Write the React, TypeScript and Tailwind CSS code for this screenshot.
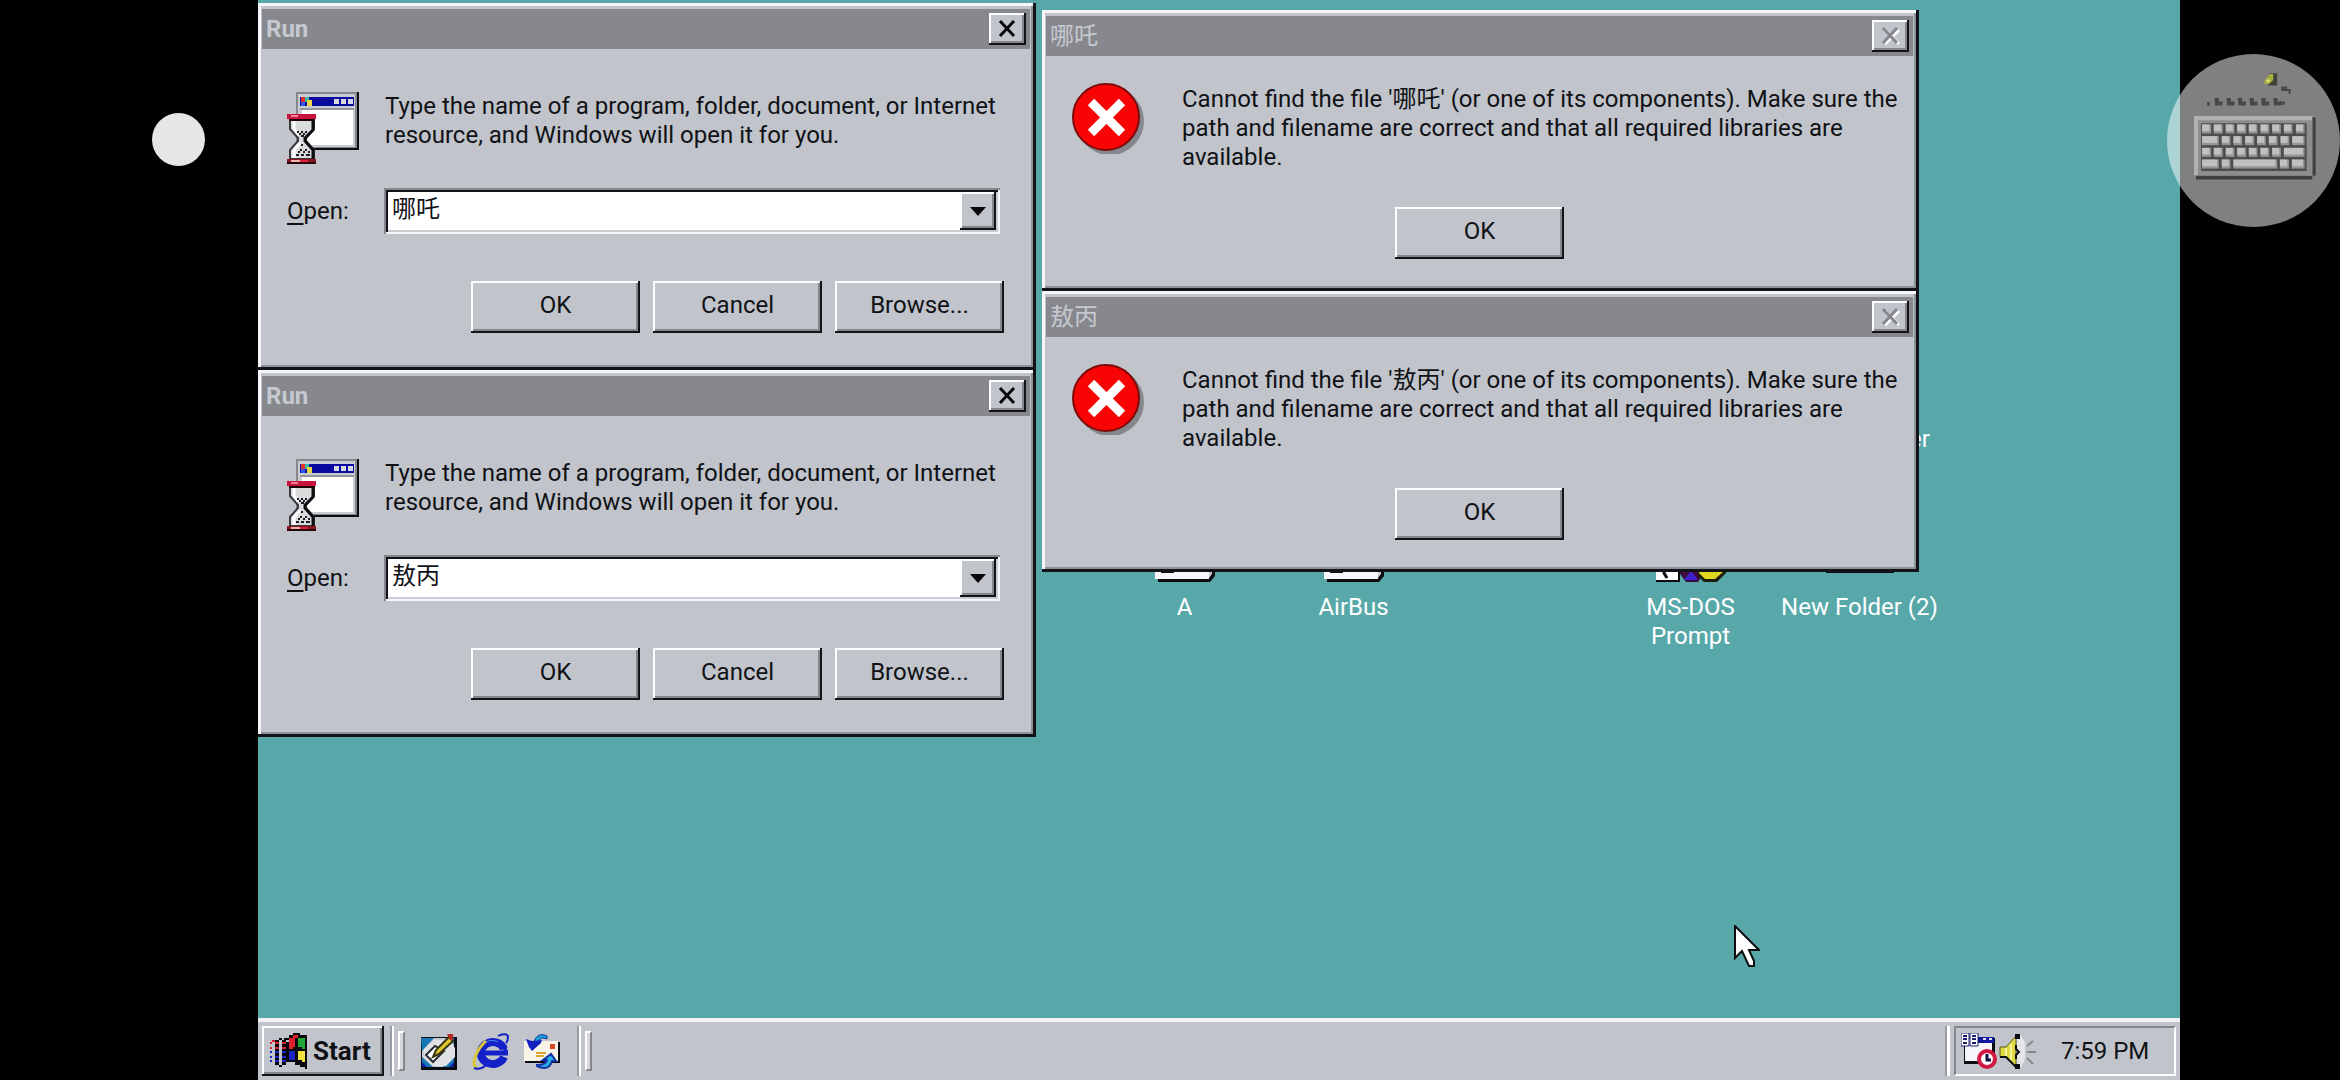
import { useState } from "react";

const raised =
  "bg-[#c1c4cb] shadow-[inset_-2px_-2px_0_#111318,inset_2px_2px_0_#fcfdff,inset_-4px_-4px_0_#85878d]";
const windowFrame =
  "absolute bg-[#c1c4cb] p-[6px] pl-[4px] shadow-[inset_-3px_-3px_0_#111318,inset_3px_3px_0_#f4f6fa,inset_-5px_-5px_0_#8f9198]";

const palette: Record<string, string> = {
  k: "#08080c",
  r: "#e0202c",
  g: "#20a838",
  b: "#1c24c8",
  y: "#f0e040",
};

const flag = [
  "..........kkk...",
  "........kkrrkkkk",
  "....k.kkrrrkgggk",
  ".rkk.kk.rrrkgggk",
  "r.rr.rrkrrrkgggk",
  "..kk.kkkrrrkgggk",
  "r.rr.rrkrrkkkkgk",
  "..kk.kkkkkkkkkkk",
  "b.bb.bbkbbbkyyyk",
  "..kk.kkkbbbkyyyk",
  "b.bb.bbkbbbkyyyk",
  "..kk.kkkbbbkyyyk",
  "b.bb.bbkkkkkkkyk",
  "..kk.kk....kkkkk",
  "....k........kkk",
  "...............k",
];

// x, width of every key, one list per row
const keyRows = [
  [[157, 27], [192, 27], [228, 26], [262, 27], [297, 26], [332, 26], [367, 26], [402, 26], [438, 26]],
  [[157, 50], [216, 26], [251, 26], [286, 27], [322, 26], [357, 26], [392, 26], [427, 37]],
  [[157, 27], [192, 27], [228, 26], [262, 27], [297, 26], [332, 26], [367, 26], [402, 62]],
  [[157, 50], [216, 26], [251, 131], [390, 27], [426, 38]],
];

function FlagIcon() {
  return (
    <svg viewBox="0 0 16 16" preserveAspectRatio="none" shapeRendering="crispEdges" className="h-9 w-[37px]">
      {flag.map((row, y) =>
        row.split("").map((c, x) =>
          c === "." ? null : <rect key={`${x}-${y}`} x={x} y={y} width="1" height="1" fill={palette[c]} />
        )
      )}
    </svg>
  );
}

function RunIcon() {
  return (
    <svg viewBox="0 0 72 72" className="h-[72px] w-[72px] shrink-0">
      <g shapeRendering="crispEdges">
        <rect x="9" y="0" width="63" height="58" fill="#0c0d10" />
        <rect x="9" y="0" width="61" height="56" fill="#85878d" />
        <rect x="11" y="2" width="57" height="53" fill="#c9ccd2" />
        <rect x="13" y="5" width="54" height="9" fill="#0a0aa0" />
        <rect x="14" y="5" width="4" height="5" fill="#e03030" />
        <rect x="18" y="5" width="4" height="5" fill="#38b8a0" />
        <rect x="14" y="10" width="4" height="4" fill="#3058f0" />
        <rect x="20" y="8" width="5" height="6" fill="#e8d848" />
        <rect x="47" y="7" width="5" height="5" fill="#d8dae0" />
        <rect x="54" y="7" width="5" height="5" fill="#d8dae0" />
        <rect x="61" y="7" width="5" height="5" fill="#d8dae0" />
        <rect x="13" y="16" width="54" height="2" fill="#94969c" />
        <rect x="15" y="18" width="51" height="35" fill="#fff" />
      </g>
      <path d="M3 28h24v9l-8 9v3l8 9v9H3v-9l8-9v-3l-8-9z" fill="#d9dbdd" stroke="#3a3b40" strokeWidth="2" />
      <path d="M7 29v8l5 6M7 66v-8l6-7" stroke="#fff" strokeWidth="3" fill="none" />
      <path d="M26 29v9l-8 8v3l8 9v9" stroke="#0c0d10" strokeWidth="3" fill="none" />
      <path
        d="M10 40h2m2 0h2m2 0h2M12 42h2m2 0h2M14 44h3M14 53h2M13 58h2m3 0h2M11 60h2m3 0h2m3 0h2M9 63h3m2 0h3m2 0h4"
        stroke="#1c1d20"
        strokeWidth="2"
      />
      <g shapeRendering="crispEdges">
        <rect x="0" y="22" width="29" height="5" fill="#c8143c" />
        <rect x="4" y="23" width="7" height="2" fill="#f08098" />
        <rect x="2" y="27" width="26" height="2" fill="#200408" />
        <rect x="0" y="67" width="29" height="5" fill="#8c1420" />
        <rect x="4" y="68" width="9" height="2" fill="#f0b0b0" />
        <rect x="13" y="68" width="8" height="2" fill="#e02038" />
        <rect x="0" y="70" width="29" height="2" fill="#280408" />
      </g>
    </svg>
  );
}

function ErrorIcon() {
  return (
    <svg viewBox="0 0 72 72" className="h-[72px] w-[72px] shrink-0">
      <circle cx="38" cy="39" r="34" fill="#85878d" />
      <circle cx="34" cy="35" r="33" fill="#f80404" stroke="#7c0808" strokeWidth="2" />
      <path d="M19 20l31 31M50 20L19 51" stroke="#fff" strokeWidth="9" />
    </svg>
  );
}

function NotepadIcon() {
  return (
    <svg viewBox="0 0 37 37" className="h-[37px] w-[37px]">
      <path d="M0 4h36v33H0z" fill="#0a0c14" />
      <path d="M1 5h32v29H1z" fill="#c9ccd2" />
      <path d="M0 5h13L1 18zM24 5h9v6zM1 24l11 10H1zM33 24v10H22z" fill="#1478b8" />
      <path d="M1 29l5 5H1zM33 29v5h-5z" fill="#1420a8" />
      <path d="M13 7h14l7 8v9l-9 9H12L3 24v-8z" fill="#dfe1e6" />
      <path d="M5 22l9-9 9 5-11 11z" fill="#fff" stroke="#2a2c34" strokeWidth="2" />
      <path d="M12 24l3-7L28 4l4 4-14 13z" fill="#e0c830" stroke="#3c3410" strokeWidth="2" />
      <path d="M26 1h6v6h-3z" fill="#b02820" />
    </svg>
  );
}

function ExplorerIcon() {
  return (
    <svg viewBox="0 0 38 37" className="h-[37px] w-[38px]">
      <path d="M32 24a12 11 0 1 1 0-8" fill="none" stroke="#1420c8" strokeWidth="8" />
      <path d="M10 20h26" stroke="#1420c8" strokeWidth="5" />
      <path d="M33 12c2 3 3 6 3 10h-7z" fill="#1420c8" />
      <path d="M14 9c3-2 8-2 12 0" fill="none" stroke="#4c90f0" strokeWidth="1" />
      <path d="M5 35C-2 33 4 17 14 8" fill="none" stroke="#d8c838" strokeWidth="3" />
      <path d="M2 35c5 2 9 0 12-3" fill="none" stroke="#1420c8" strokeWidth="2" />
      <path d="M26 3c5-3 10-2 10 1 0 2 0 4-2 6" fill="none" stroke="#1420c8" strokeWidth="2" />
    </svg>
  );
}

function MailIcon() {
  return (
    <svg viewBox="0 0 37 37" className="h-[37px] w-[37px]">
      <path d="M1 9h35v21H1z" fill="#0a0c14" />
      <path d="M0 8h34v20H0z" fill="#f8f4e8" />
      <path d="M12 20h10M12 23h8" stroke="#d8a830" strokeWidth="2" />
      <rect x="26" y="11" width="5" height="5" fill="#d84820" />
      <path d="M23 3C17 0 12 2 10 9l4 1c2-5 4-6 9-4z" fill="#18a0d8" stroke="#1430a8" strokeWidth="1" />
      <path d="M2 6l6 2 10-1-1 3-9 8-3-4z" fill="#1420c0" />
      <path d="M13 33c8 4 13 2 15-5h4l-5-7-8 6h4c-1 4-4 5-10 5z" fill="#28b0e0" stroke="#1430a8" strokeWidth="2" />
    </svg>
  );
}

function SchedulerIcon() {
  return (
    <svg viewBox="0 0 38 37" className="h-[37px] w-[38px]">
      <path d="M3 5h31v26H3z" fill="#0a0c14" />
      <path d="M4 6h27v22H4z" fill="#f6f6fa" />
      <path d="M17 4h16v6H17z" fill="#1018a0" />
      <path d="M22 6h3m3 0h3" stroke="#dfe1f0" strokeWidth="2" />
      <path d="M0 0h8v13H0zM9 0h8v13H9z" fill="#fff" stroke="#1c2070" strokeWidth="1" />
      <path d="M2 3h4M2 6h4M2 10h4M11 3h4M11 6h4M11 10h4" stroke="#1c2070" strokeWidth="2" />
      <circle cx="26" cy="26" r="8" fill="#fff" stroke="#d01840" strokeWidth="4" />
      <path d="M26 21v6h4" fill="none" stroke="#101040" strokeWidth="3" />
    </svg>
  );
}

function SpeakerIcon() {
  return (
    <svg viewBox="0 0 38 37" className="h-[37px] w-[38px]">
      <path d="M18 2h4l4 8v16l-4 9h-4z" fill="#e4e6ea" />
      <path d="M1 14h6L17 3v31L7 24H1z" fill="#e0d840" stroke="#5c5818" strokeWidth="1" />
      <path d="M7 15v9M12 11v16" stroke="#f6f4a0" strokeWidth="2" />
      <path d="M1 24h6l10 10" stroke="#0a0c10" strokeWidth="2" fill="none" />
      <path d="M16 1h5v5h-5zM16 31h5v5h-5z" fill="#0a0c10" />
      <path d="M17 12v4l3 3-3 3v4" stroke="#0a0c10" strokeWidth="2" fill="none" />
      <path d="M28 13l6-5M28 19h9M28 25l6 6" stroke="#85878d" strokeWidth="2" />
    </svg>
  );
}

function KeyboardIcon() {
  return (
    <svg viewBox="52 42 518 518" className="h-full w-full">
      <path d="M360 100h22v36h-28z" fill="#40423c" />
      <path d="M344 122l16-20h10v18l-12 12h-14z" fill="#a4b040" />
      <path d="M350 118h10v8h-10z" fill="#dce078" />
      <path d="M394 139h18v8h10v14h-6v-8h-22zM172 186h8v10h-8z" fill="#46484a" />
      {[194, 230, 264, 299, 334, 370].map((x) => (
        <path key={x} d={`M${x} 174h13v10h11v12h-22z`} fill="#46484a" />
      ))}
      <path d="M390 184h15v10h-15z" fill="#46484a" />
      <path d="M139 232h358v174H487v12H139z" fill="#3c3e40" />
      <path d="M133 228h354v178H133z" fill="#b0b2b2" />
      <path d="M145 240h342v166H145z" fill="#8c8e8e" />
      <path d="M154 249h316v143H154z" fill="#4c4e4e" />
      {keyRows.map((row, r) =>
        row.map(([x, w]) => (
          <g key={`${r}-${x}`}>
            <rect x={x} y={253 + r * 35} width={w} height="27" fill="#949696" />
            <rect x={x} y={253 + r * 35} width={w - 5} height="20" fill="#bfc1c1" />
          </g>
        ))
      )}
    </svg>
  );
}

function CloseButton({ disabled = false }: { disabled?: boolean }) {
  return (
    <button type="button" aria-label="Close" disabled={disabled} className={`flex h-8 w-[37px] items-center justify-center ${raised}`}>
      <svg viewBox="0 0 20 18" className="h-[18px] w-5">
        {disabled && <path d="M4 3l14 14M18 3L4 17" stroke="#fff" strokeWidth="3" />}
        <path d="M2 1l14 15M16 1L2 16" stroke={disabled ? "#85878d" : "#08080c"} strokeWidth="3" />
      </svg>
    </button>
  );
}

function PushButton({ children }: { children: string }) {
  return (
    <button type="button" className={`h-[52px] w-[169px] pb-1 ${raised}`}>
      {children}
    </button>
  );
}

function TitleBar({ title, disabled = false }: { title: string; disabled?: boolean }) {
  return (
    <div className="flex h-10 items-center justify-between bg-[#86888e] px-1 text-[#c6c9d0]">
      <h2 className={disabled ? "" : "font-bold"}>{title}</h2>
      <CloseButton disabled={disabled} />
    </div>
  );
}

function RunDialog({ id, name, className }: { id: string; name: string; className: string }) {
  const [value, setValue] = useState(name);
  return (
    <section className={`${windowFrame} w-[778px] ${className}`}>
      <TitleBar title="Run" />
      <div className="pt-[43px] pr-[26px] pb-[31px] pl-[25px]">
        <div className="flex gap-[26px]">
          <RunIcon />
          <p className="flex-1">
            Type the name of a program, folder, document, or Internet resource, and Windows will open it for you.
          </p>
        </div>
        <div className="mt-6 flex items-center pr-1">
          <label htmlFor={id} className="w-[97px]">
            <span className="underline underline-offset-4">O</span>pen:
          </label>
          <div className="flex h-[46px] flex-1 bg-white p-1 shadow-[inset_2px_2px_0_#85878d,inset_-2px_-2px_0_#f4f6fa,inset_4px_4px_0_#111318,inset_-4px_-4px_0_#c9ccd2]">
            <input
              id={id}
              value={value}
              onChange={(e) => setValue(e.target.value)}
              className="min-w-0 flex-1 bg-transparent pb-1 pl-1 outline-none"
            />
            <button type="button" aria-label="Show list" className={`flex w-9 items-center justify-center ${raised}`}>
              <svg viewBox="0 0 16 9" className="h-[9px] w-4">
                <path d="M0 0h16L8 9z" fill="#08080c" />
              </svg>
            </button>
          </div>
        </div>
        <div className="mt-[47px] flex justify-end gap-[13px]">
          <PushButton>OK</PushButton>
          <PushButton>Cancel</PushButton>
          <PushButton>Browse...</PushButton>
        </div>
      </div>
    </section>
  );
}

function ErrorDialog({ name, className }: { name: string; className: string }) {
  return (
    <section className={`${windowFrame} w-[877px] ${className}`}>
      <TitleBar title={name} disabled />
      <div className="flex flex-col items-center pt-[26px] pb-[26px] pl-[26px]">
        <div className="flex w-full gap-[38px]">
          <ErrorIcon />
          <p className="flex-1 pt-[3px]">
            {`Cannot find the file '${name}' (or one of its components). Make sure the path and filename are correct and that all required libraries are available.`}
          </p>
        </div>
        <div className="mt-[35px] mr-[26px]">
          <PushButton>OK</PushButton>
        </div>
      </div>
    </section>
  );
}

function FolderIcon() {
  return (
    <svg viewBox="0 0 60 30" className="h-[30px] w-[60px]">
      <path d="M3 0h57v24l-5 6H3z" fill="#0c0d10" />
      <path d="M54 0h3v22l-3 4z" fill="#c9ccd2" />
      <path d="M0 0h54v27H0z" fill="#f8f8fc" />
      <path d="M6 16h13v5H6z" fill="#0c0d10" />
    </svg>
  );
}

function DosIcon() {
  return (
    <svg viewBox="0 0 70 30" className="h-[30px] w-[70px]">
      <path d="M0 0h24v30H0z" fill="#0c0d10" />
      <path d="M0 0h22v28H0z" fill="#fff" />
      <path d="M12 17H8v4l3 5" fill="none" stroke="#0c0d10" strokeWidth="3" />
      <path d="M24 0h22v24l-4 6H30l-6-8z" fill="#3c0c40" />
      <path d="M28 28l7-9 7 9z" fill="#4020d0" />
      <path d="M42 14h28v7l-9 9H48l-6-6z" fill="#1c1c08" />
      <path d="M43 12h24v8l-8 7H49l-6-6z" fill="#e0d820" />
    </svg>
  );
}

function DarkIcon() {
  return (
    <svg viewBox="0 0 68 30" className="h-[30px] w-[68px]">
      <path d="M0 0h68v21H0z" fill="#0c0d18" />
    </svg>
  );
}

const shortcuts = [
  { label: "A", icon: FolderIcon, className: "left-[842px]" },
  { label: "AirBus", icon: FolderIcon, className: "left-[1011px]" },
  { label: "MS-DOS Prompt", icon: DosIcon, className: "left-[1348px]" },
  { label: "New Folder (2)", icon: DarkIcon, className: "left-[1517px]" },
];

function Grip() {
  return (
    <div className="flex items-center gap-1">
      <div className="h-[50px] w-1 border-r-2 border-l-2 border-r-white border-l-[#9a9ca2]" />
      <div className="h-10 w-[7px] border-t-2 border-r-2 border-b-2 border-l-2 border-t-white border-r-[#85878d] border-b-[#85878d] border-l-white bg-[#d6d8dd]" />
    </div>
  );
}

function Taskbar() {
  return (
    <footer className="flex h-[62px] items-center border-t-4 border-t-[#f0f2f5] bg-[#c1c4cb] px-1">
      <button type="button" className={`flex h-[50px] w-[122px] items-center gap-[6px] pl-2 text-[26px] font-bold ${raised}`}>
        <FlagIcon />
        Start
      </button>
      <div className="ml-[6px]">
        <Grip />
      </div>
      <nav className="mr-4 ml-4 flex gap-[14px]">
        <button type="button" aria-label="Desktop">
          <NotepadIcon />
        </button>
        <button type="button" aria-label="Browser">
          <ExplorerIcon />
        </button>
        <button type="button" aria-label="Mail">
          <MailIcon />
        </button>
      </nav>
      <Grip />
      <div className="ml-auto flex items-center gap-1">
        <div className="h-[50px] w-[5px] border-r-3 border-l-2 border-r-white border-l-[#9a9ca2]" />
        <div className="flex h-[50px] w-[222px] items-center border-t-2 border-r-2 border-b-2 border-l-2 border-t-[#85878d] border-r-white border-b-white border-l-[#85878d] pl-[5px]">
          <SchedulerIcon />
          <SpeakerIcon />
          <time className="ml-6">7:59 PM</time>
        </div>
      </div>
    </footer>
  );
}

export default function App() {
  return (
    <div className="relative flex h-screen overflow-hidden bg-black font-['Roboto','Noto_Sans_CJK_SC',sans-serif] text-[24px] leading-[29px] text-[#101216]">
      <div className="flex w-[258px] shrink-0 justify-center">
        <div className="mt-[113px] ml-[98px] size-[53px] rounded-full bg-[#e6e6e6]" />
      </div>

      <main className="flex flex-1 flex-col">
        <div className="relative flex-1 overflow-hidden bg-[#58a8aa]">
          {shortcuts.map(({ label, icon: Icon, className }) => (
            <div key={label} className={`absolute top-[552px] flex w-[169px] flex-col items-center text-white ${className}`}>
              <Icon />
              <span className={`mt-[11px] text-center ${label === "MS-DOS Prompt" ? "w-[120px]" : "whitespace-nowrap"}`}>
                {label}
              </span>
            </div>
          ))}
          <span className="absolute top-[425px] left-[1651px] text-white">er</span>

          <ErrorDialog name="哪吒" className="top-[10px] left-[784px]" />
          <ErrorDialog name="敖丙" className="top-[291px] left-[784px]" />
          <RunDialog id="open-first" name="哪吒" className="top-[3px] left-0" />
          <RunDialog id="open-second" name="敖丙" className="top-[370px] left-0" />

          <svg viewBox="0 0 26 43" className="absolute top-[925px] left-[1476px] h-[43px] w-[26px]">
            <path d="M1 1v32l7-7 7 15h5v-5l-5-11h10z" fill="#fff" stroke="#0c0d10" strokeWidth="2" />
          </svg>
        </div>
        <Taskbar />
      </main>

      <div className="w-40 shrink-0" />
      <button
        type="button"
        aria-label="Toggle keyboard"
        className="absolute top-[54px] right-0 size-[173px] overflow-hidden rounded-full bg-white/50"
      >
        <KeyboardIcon />
      </button>
    </div>
  );
}
